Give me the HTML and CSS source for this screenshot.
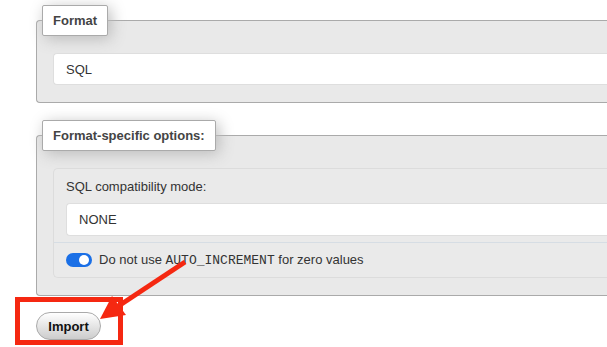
FILE: index.html
```html
<!DOCTYPE html>
<html lang="en">
<head>
  <meta charset="UTF-8">
  <title>Import - phpMyAdmin</title>
  <meta name="viewport" content="width=device-width, initial-scale=1.0">
  <link rel="stylesheet" href="styles.css">
</head>
<body>
  <div class="page">
    <fieldset class="group">
      <legend>Format</legend>
      <select class="select">
        <option>SQL</option>
      </select>
    </fieldset>

    <fieldset class="group">
      <legend>Format-specific options:</legend>
      <div class="options">
        <div class="option-row">
          <label class="option-label" for="compat">SQL compatibility mode:</label>
          <select class="select select-tall" id="compat">
            <option>NONE</option>
          </select>
        </div>
        <div class="option-row toggle-row">
          <span class="toggle"><span class="knob"></span></span>
          <span>Do not use <code>AUTO_INCREMENT</code> for zero values</span>
        </div>
      </div>
    </fieldset>

    <button class="import-btn">Import</button>
  </div>

  <!-- annotation overlay -->
  <div class="highlight"></div>
  <svg class="arrow" width="607" height="347" viewBox="0 0 607 347">
    <line x1="185" y1="262" x2="114" y2="309" stroke="#f52811" stroke-width="5"/>
    <polygon points="100,319 112,296 126,315" fill="#f52811"/>
  </svg>
</body>
</html>
```

FILE: styles.css
```css
body {
  margin: 0;
  font-family: "Liberation Sans", Arial, Helvetica, sans-serif;
  font-size: 13px;
  color: #333;
  background: #fff;
  overflow: hidden;
}

.page {
  padding: 5px 0 0 36px;
}

/* fieldsets run off the right edge in the screenshot */
.group {
  margin: 0 0 17px 0;
  padding: 17px 0 17px 16px;
  background: #e9e9e9;
  border: 1px solid #aaa;
  border-right: none;
  border-radius: 4px 0 0 4px;
}

.group legend {
  margin-left: -11px;
  padding: 6px 10px;
  line-height: 17px;
  font-weight: bold;
  color: #444;
  background: #fff;
  border: 1px solid #aaa;
  border-radius: 2px;
  box-shadow: 3px 3px 15px #bbb;
}

.select {
  display: block;
  width: 100%;
  height: 32px;
  margin: 0;
  padding: 0 12px;
  font-family: inherit;
  font-size: 13px;
  color: #333;
  background: #fff;
  border: 1px solid #dedede;
  border-right: none;
  border-radius: 4px 0 0 4px;
  appearance: none;
  -webkit-appearance: none;
}

.select-tall {
  height: 33px;
}

.options {
  background: #eaeaea;
  border: 1px solid #dcdcdc;
  border-right: none;
  border-radius: 5px 0 0 5px;
}

.option-row {
  padding: 9px 0 6px 12px;
  border-bottom: 1px solid #d6dde4;
}

.option-row:last-child {
  border-bottom: none;
}

.option-label {
  display: block;
  line-height: 17px;
  margin-bottom: 8px;
  color: #333;
}

.toggle-row {
  display: flex;
  align-items: center;
  gap: 7px;
  height: 34px;
  padding: 0 0 0 12px;
  color: #333;
}

.toggle-row code {
  font-family: "Liberation Mono", "DejaVu Sans Mono", monospace;
  font-size: 13px;
}

.toggle {
  position: relative;
  display: inline-block;
  width: 26px;
  height: 14px;
  border-radius: 7px;
  background: #1a6fe6;
}

.knob {
  position: absolute;
  top: 2px;
  right: 3px;
  width: 10px;
  height: 10px;
  border-radius: 50%;
  background: #fff;
}

.import-btn {
  display: block;
  width: 65px;
  height: 28px;
  margin-top: -1px;
  padding: 0;
  font-family: inherit;
  font-size: 13px;
  font-weight: bold;
  color: #111;
  background: linear-gradient(#ffffff, #cccccc);
  border: 1px solid #aaa;
  border-radius: 14px;
  cursor: pointer;
}

.highlight {
  position: absolute;
  left: 15px;
  top: 297px;
  width: 98px;
  height: 38px;
  border: 5px solid #f52811;
}

.arrow {
  position: absolute;
  left: 0;
  top: 0;
  pointer-events: none;
}
```
